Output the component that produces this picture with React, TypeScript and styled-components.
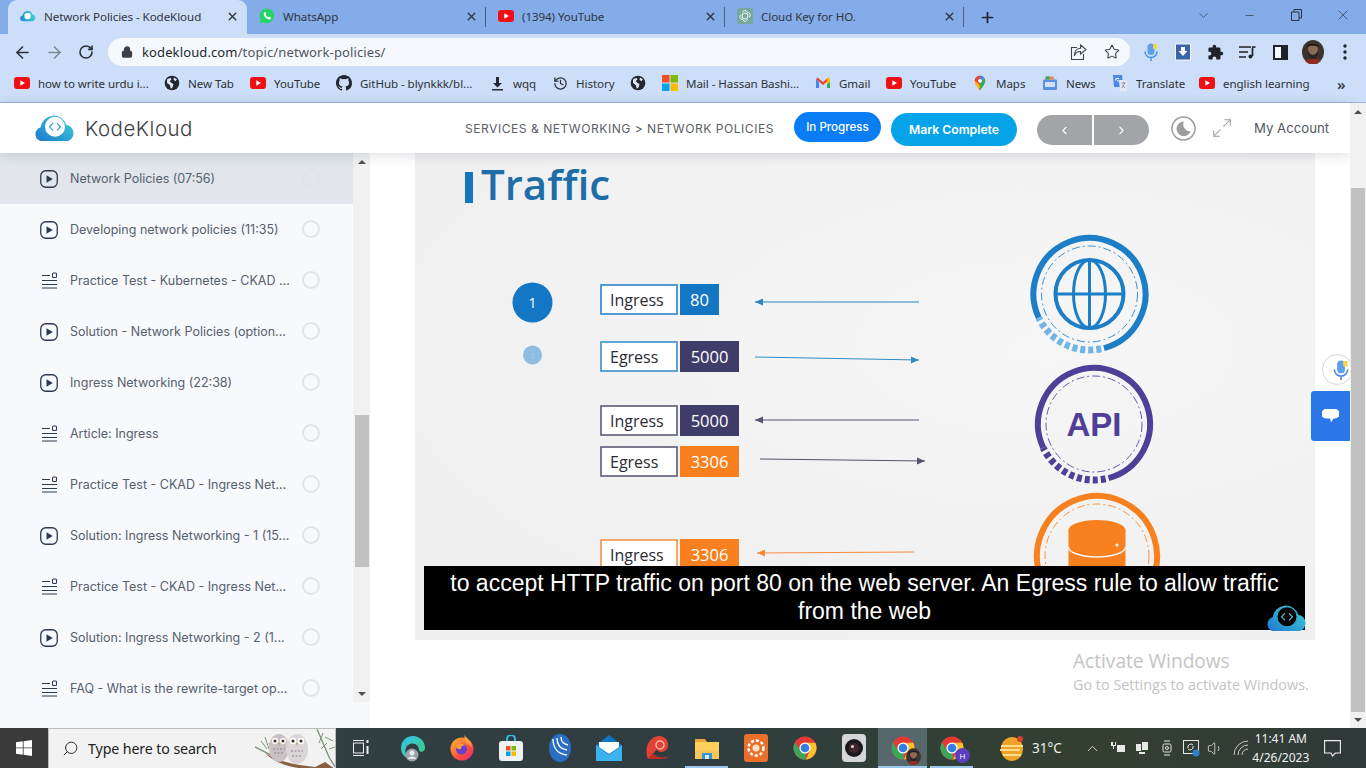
import React from 'react';
import styled, { createGlobalStyle } from 'styled-components';
import { ArrowLeft, ArrowRight, RotateCw, Lock, Star, X, Plus, ChevronDown, Minus, History, Search, ChevronUp, Maximize2, ChevronLeft, ChevronRight, Volume1 } from 'lucide-react';

const Global = createGlobalStyle`
  html, body { margin: 0; padding: 0; width: 1366px; height: 768px; overflow: hidden; background: #fff; }
  * { box-sizing: border-box; }
`;

const UI = `"Noto Sans", "Open Sans", sans-serif`;
const Root = styled.div`
  width: 1366px; height: 768px; display: flex; flex-direction: column; overflow: hidden; position: relative;
  font-family: ${UI};
`;

/* ---------- Browser chrome ---------- */
const TabStrip = styled.div`
  height: 34px; background: #84ace8; display: flex; align-items: stretch; padding-left: 8px;
`;
const Tab = styled.div<{ $active?: boolean; $sep?: boolean }>`
  width: 239px; flex: none; display: flex; align-items: center; padding: 0 8px 2px 12px; gap: 8px; position: relative;
  background: ${p => (p.$active ? '#cddff8' : 'transparent')};
  border-radius: ${p => (p.$active ? '9px 9px 0 0' : '0')};
  font-size: 11.6px; color: #30353f; letter-spacing: -0.08px;
  ${p => p.$sep ? `&::after { content: ''; position: absolute; right: 0; top: 7px; height: 20px; width: 1px; background: #4d5d78; }` : ''}
`;
const TabTitle = styled.span`flex: 1; white-space: nowrap; overflow: hidden;`;
const FavSlot = styled.span`width: 16px; height: 16px; flex: none; display: flex;`;
const NewTab = styled.div`
  width: 46px; display: flex; align-items: center; justify-content: center; color: #1f2430;
`;
const WinControls = styled.div`
  margin-left: auto; display: flex; width: 186px; align-items: flex-start; color: #2c3240;
`;
const WinBtn = styled.div`
  width: 46.5px; height: 30px; display: flex; align-items: center; justify-content: center;
`;
const ToolBar = styled.div`
  height: 33px; background: #cddff8; display: flex; align-items: center; padding: 3px 0 0 6px; position: relative;
`;
const NavIcon = styled.div<{ $dim?: boolean }>`
  width: 32px; display: flex; justify-content: center; color: ${p => (p.$dim ? '#7f8694' : '#2b3038')};
`;
const Omnibox = styled.div`
  margin-left: 6px; width: 1022px; height: 28px; border-radius: 14px; background: #f5f9fe; display: flex; align-items: center; padding: 0 2px 0 13px; color: #3d4149;
`;
const Url = styled.span`
  margin-left: 9px; flex: 1; font-size: 13px; color: #50555e; letter-spacing: 0.12px;
  b { font-weight: 400; color: #24272c; }
`;
const OmniAction = styled.div`width: 33px; display: flex; justify-content: center; color: #40454e;`;
const ExtRow = styled.div`display: flex; align-items: center; margin-left: 4.5px;`;
const ExtSlot = styled.div`width: 32.4px; display: flex; justify-content: center; align-items: center; color: #20252c;`;
const BookmarkBar = styled.div`
  height: 36px; background: #cddff8; border-bottom: 1px solid #9eb1d6; display: flex; align-items: center; padding: 0 0 3px 14px; position: relative;
`;
const Bookmark = styled.div<{ $w: number }>`
  width: ${p => p.$w}px; flex: none; display: flex; align-items: center; gap: 8px; font-size: 11.55px; color: #2d3138; white-space: nowrap; letter-spacing: -0.05px;
`;
const BmMore = styled.div`
  position: absolute; left: 1337px; top: 7px; font-size: 15px; font-weight: 600; color: #3a3f48;
`;

/* ---------- Page ---------- */
const PageFrame = styled.div`flex: 1; min-height: 0; display: flex; background: #fff; position: relative;`;
const PageColumn = styled.div`flex: 1; min-width: 0; display: flex; flex-direction: column;`;
const Header = styled.header`
  height: 50px; flex: none; background: #fff; display: flex; align-items: center; padding-left: 35px; box-shadow: 0 2px 12px rgba(40,50,70,.16); position: relative; z-index: 3;
`;
const Wordmark = styled.span`
  margin-left: 10px; font-family: Inter, sans-serif; font-weight: 300; font-size: 20.5px; color: #3c3d41; letter-spacing: 0.5px; width: 380px; flex: none;
`;
const Crumb = styled.span`
  font-family: Inter, sans-serif; font-size: 12.1px; color: #5b6068; letter-spacing: 0.5px; width: 329px; white-space: nowrap; flex: none; margin-top: 1px;
`;
const Pill = styled.div<{ $bg: string; $w: number; $h: number; $weight: number; $fs: number; $ml?: number; $mt?: number }>`
  width: ${p => p.$w}px; height: ${p => p.$h}px; background: ${p => p.$bg}; border-radius: 17px; color: #fff;
  margin-left: ${p => p.$ml || 0}px; margin-top: ${p => p.$mt || 0}px;
  font-family: Inter, sans-serif; font-weight: ${p => p.$weight}; font-size: ${p => p.$fs}px; display: flex; align-items: center; justify-content: center; flex: none;
`;
const NavGroup = styled.div`
  margin-left: 20px; width: 112px; height: 30px; display: flex; gap: 2px; border-radius: 15px; overflow: hidden; margin-top: 4px; flex: none;
`;
const NavHalf = styled.div`
  flex: 1; background: #a3a4a8; color: #fff; display: flex; align-items: center; justify-content: center;
`;
const IconSlot = styled.div<{ $ml: number; $c?: string }>`
  margin-left: ${p => p.$ml}px; display: flex; color: ${p => p.$c || '#9a9ca0'}; flex: none;
`;
const Account = styled.span`
  margin-left: 21px; font-family: Inter, sans-serif; font-size: 13.2px; color: #54585f; white-space: nowrap;
`;
const Body = styled.div`flex: 1; min-height: 0; display: flex;`;
const Sidebar = styled.aside`
  width: 370px; flex: none; background: #f8f9fc; display: flex; align-items: flex-start;
`;
const LessonList = styled.div`width: 353px; flex: none; display: flex; flex-direction: column;`;
const Lesson = styled.div<{ $on?: boolean }>`
  height: 51px; display: flex; align-items: center; padding-left: 40px; background: ${p => (p.$on ? '#e2e6ec' : 'transparent')};
`;
const LessonIcon = styled.div`width: 18px; height: 18px; display: flex; flex: none; color: #2c3a50;`;
const LessonText = styled.span`
  margin-left: 12px; width: 232px; font-family: Inter, sans-serif; font-size: 12.5px; color: #55606f; white-space: nowrap; overflow: hidden;
`;
const Radio = styled.span<{ $on?: boolean }>`
  width: 18px; height: 18px; border-radius: 50%; border: 2px solid ${p => (p.$on ? '#dfe2e7' : '#e2e4e8')}; flex: none; margin-bottom: 2px;
`;
const MiniTrack = styled.div`
  width: 17px; height: 549px; background: #f1f1f1; display: flex; flex-direction: column; align-items: center; flex: none;
`;
const PageTrack = styled.div`
  width: 16px; flex: none; background: #f1f1f1; display: flex; flex-direction: column; align-items: center; position: relative; z-index: 4;
`;
const ArrowUp = styled.i<{ $m: number }>`
  width: 0; height: 0; border: 4px solid transparent; border-top: 0; border-bottom: 4px solid #505050; margin-top: ${p => p.$m}px; flex: none;
`;
const ArrowDown = styled.i<{ $m: number }>`
  width: 0; height: 0; border: 4px solid transparent; border-bottom: 0; border-top: 4px solid #505050; margin-bottom: ${p => p.$m}px; margin-top: auto; flex: none;
`;
const Thumb = styled.div<{ $top: number; $h: number; $w: number }>`
  width: ${p => p.$w}px; height: ${p => p.$h}px; margin-top: ${p => p.$top}px; background: #c1c1c1; flex: none;
`;
const Main = styled.main`flex: 1; min-width: 0; padding-left: 45px; position: relative;`;
const Video = styled.div`
  width: 900px; height: 487px; background: radial-gradient(ellipse at 70% 40%, #f6f6f6, #f0f0f1 75%); position: relative;
  svg { display: block; }
`;
const Caption = styled.div`
  position: absolute; left: 9px; top: 413px; width: 881px; height: 64px; background: #000; color: #fff;
  font-family: "Liberation Sans", Arial, sans-serif; font-size: 23px; line-height: 28px; text-align: center; padding: 3px 20px 0;
`;
const Watermark = styled.div`position: absolute; left: 852px; top: 452px;`;
const Activate = styled.div`
  position: absolute; left: 703px; top: 496px; color: #c4c4c4; font-family: "Open Sans", sans-serif; white-space: nowrap;
  p { margin: 0; font-size: 19.1px; line-height: 25px; }
  small { display: block; font-size: 14.4px; line-height: 20px; margin-top: 1px; }
`;
const MicBubble = styled.div`
  position: absolute; left: 952px; top: 201px; width: 31px; height: 31px; border-radius: 50%; background: #fff; border: 1px solid #d4d6da; overflow: hidden; display: flex; align-items: center; padding-left: 8px;
`;
const ChatTab = styled.div`
  position: absolute; left: 941px; top: 238px; width: 39px; height: 50px; background: #2b77e8; border-radius: 3px 0 0 3px; display: flex; align-items: center; justify-content: center;
`;

/* ---------- Taskbar ---------- */
const Taskbar = styled.footer`
  height: 40px; flex: none; display: flex; align-items: center; background: linear-gradient(90deg, #343f42 0%, #2f3d41 50%, #33402f 80%, #2f3a3a 100%); color: #fff; position: relative; z-index: 5;
`;
const StartBtn = styled.div`width: 48px; height: 40px; flex: none; background: #3a3a3a; display: flex; align-items: center; justify-content: center;`;
const SearchBox = styled.div`
  width: 288px; height: 40px; flex: none; background: #f2f2f2; border: 1px solid #bdbdbd; border-bottom: 0; display: flex; align-items: center; padding-left: 13px; color: #222; font-size: 14.2px; position: relative; overflow: hidden;
  span { margin-left: 9px; letter-spacing: -0.1px; }
`;
const SearchGlyph = styled(Search)`transform: scaleX(-1); flex: none;`;
const OwlArt = styled.div`position: absolute; right: 0; top: 0;`;
const TaskIcon = styled.div<{ $w: number; $ml?: number; $active?: boolean; $run?: boolean }>`
  width: ${p => p.$w}px; height: 40px; margin-left: ${p => p.$ml || 0}px; display: flex; align-items: center; justify-content: center; flex: none; position: relative;
  background: ${p => (p.$active ? '#56686c' : 'transparent')};
  ${p => p.$run ? `&::after { content: ''; position: absolute; left: ${p.$active ? 0 : 3}px; right: ${p.$active ? 0 : 3}px; bottom: 0; height: 2px; background: #9cc8ee; }` : ''}
`;
const Badge = styled.span`position: absolute; left: 28px; top: 20px; display: flex;`;
const Weather = styled.div`
  margin-left: 24px; width: 80.7px; display: flex; align-items: center; font-size: 13.5px; gap: 8px; flex: none; color: #eee;
`;
const Tray = styled.div`display: flex; align-items: center; color: #e8e8e8; flex: none;`;
const TraySlot = styled.div`width: 24.6px; display: flex; justify-content: center;`;
const Clock = styled.div`
  width: 60px; text-align: center; font-size: 12px; line-height: 19px; color: #f1f1f1; margin-left: -2px; flex: none;
`;

/* ---------- Drawn icons ---------- */
const Chrome = ({ s = 24 }: { s?: number }) => (
  <svg width={s} height={s} viewBox="0 0 24 24">
    <circle cx="12" cy="12" r="11.5" fill="#e53935" />
    <path d="M12 12 L2.1 17.8 A11.5 11.5 0 0 0 13 23.5 Z" fill="#3aa757" />
    <path d="M12 6.8h10.3A11.5 11.5 0 0 1 13 23.5L17 14z" fill="#fbc02d" />
    <path d="M7 14.8 2.1 6.2 A11.5 11.5 0 0 0 2.1 17.8 L6 21.5 12 17.5z" fill="#3aa757" />
    <circle cx="12" cy="12" r="5.6" fill="#fff" />
    <circle cx="12" cy="12" r="4.3" fill="#2f7de6" />
  </svg>
);
const YT = () => (
  <svg width="16" height="16" viewBox="0 0 16 16">
    <rect x="0" y="2" width="16" height="12" rx="3" fill="#f00f14" />
    <path d="M6.3 5.3v5.4L11 8z" fill="#fff" />
  </svg>
);
const Globe = () => (
  <svg width="16" height="16" viewBox="0 0 16 16">
    <circle cx="8" cy="8" r="7.3" fill="#23272e" />
    <path d="M3 4.5l3.4-1.8 1 1.6-1.6 1.9L7.5 8l2 1-1 3.5-1.7 1.3L5.8 10 3 8zM10 2.4l3 2-1.8 1.8L9.5 4.5z" fill="#dfe8f6" />
  </svg>
);
const GitHub = () => (
  <svg width="16" height="16" viewBox="0 0 16 16" fill="#22262c">
    <path d="M8 0C3.58 0 0 3.58 0 8c0 3.54 2.29 6.53 5.47 7.59.4.07.55-.17.55-.38v-1.34c-2.23.48-2.69-1.07-2.69-1.07-.36-.93-.89-1.17-.89-1.17-.73-.5.06-.49.06-.49.8.06 1.23.82 1.23.82.71 1.23 1.87.87 2.33.66.07-.52.28-.87.51-1.07-1.78-.2-3.64-.89-3.64-3.95 0-.87.31-1.59.82-2.15-.08-.2-.36-1.02.08-2.12 0 0 .67-.21 2.2.82a7.6 7.6 0 0 1 4 0c1.53-1.04 2.2-.82 2.2-.82.44 1.1.16 1.92.08 2.12.51.56.82 1.27.82 2.15 0 3.07-1.87 3.75-3.65 3.95.29.25.54.73.54 1.48v2.2c0 .21.15.46.55.38A8 8 0 0 0 16 8c0-4.42-3.58-8-8-8z" />
  </svg>
);
const DownloadBm = () => (
  <svg width="15" height="15" viewBox="0 0 15 15" fill="#25292f">
    <path d="M6 1h3v6h3l-4.500 4.500L3 7h3zM2 13h11v1.500H2z" />
  </svg>
);
const MsGrid = () => (
  <svg width="16" height="16" viewBox="0 0 16 16">
    <rect width="7.5" height="7.5" fill="#f25022" /><rect x="8.5" width="7.5" height="7.5" fill="#7fba00" />
    <rect y="8.5" width="7.5" height="7.5" fill="#00a4ef" /><rect x="8.5" y="8.5" width="7.5" height="7.5" fill="#ffb900" />
  </svg>
);
const Gmail = () => (
  <svg width="16" height="16" viewBox="0 0 16 16">
    <path d="M1 4v9h3V7z" fill="#4285f4" /><path d="M15 4v9h-3V7z" fill="#34a853" />
    <path d="M1 4.2 2.6 2.6 8 7l5.4-4.4L15 4.2 8 10z" fill="#ea4335" />
    <path d="M13.4 2.6 15 4.2V7l-3 2.5V4z" fill="#fbbc04" />
  </svg>
);
const MapsPin = () => (
  <svg width="16" height="16" viewBox="0 0 16 16">
    <path d="M8 0.5a5.3 5.3 0 0 0-5.3 5.3C2.7 9.5 8 15.5 8 15.5V9.5z" fill="#ea4335" />
    <path d="M8 .5a5.3 5.3 0 0 1 4.3 2.2L8 7.5z" fill="#4285f4" />
    <path d="M12.3 2.7a5.3 5.3 0 0 1 1 3.1C13.3 9.5 8 15.5 8 15.5V8z" fill="#34a853" />
    <path d="M2.7 5.8 8 10l-.5 4.9C6 13 2.7 9 2.7 5.8z" fill="#fbbc04" />
    <circle cx="8" cy="5.8" r="1.9" fill="#fff" />
  </svg>
);
const NewsIco = () => (
  <svg width="16" height="16" viewBox="0 0 16 16">
    <rect x="1" y="4.5" width="14" height="10.5" rx="1" fill="#5b8fe4" />
    <path d="M3 4.5 5 1.5h6l2 3z" fill="#ea8a5a" />
    <rect x="3" y="7" width="10" height="5" fill="#cfe0fb" />
    <path d="M3.5 1.5h4v3h-4z" fill="#34a853" />
  </svg>
);
const TranslateIco = () => (
  <svg width="16" height="18" viewBox="0 0 16 18">
    <path d="M1 1h9l1 12H2z" fill="#4a86e8" />
    <path d="M7 6h8v11H8z" fill="#e6e9ef" />
    <path d="M3.5 6.4a2 2 0 0 1 3.4-1.4M6.9 7H5" stroke="#fff" fill="none" strokeWidth="1.1" />
    <path d="M9.5 9h4M11.5 8v1M10 14l3-5M10.5 10.5 13 14" stroke="#8b8f96" fill="none" strokeWidth=".9" />
  </svg>
);
const KKFav = () => (
  <svg width="16" height="16" viewBox="0 0 40 26">
    <defs><linearGradient id="kf" x1="0" x2="1"><stop offset="0" stopColor="#1f87d6" /><stop offset="1" stopColor="#41cfd6" /></linearGradient></defs>
    <path d="M8 26a7.5 7.5 0 0 1-1.2-14.9A12.5 12.5 0 0 1 31 9a8.7 8.7 0 0 1 1 17z" fill="url(#kf)" />
    <circle cx="19" cy="13" r="8" fill="#fff" />
  </svg>
);
const KKLogo = ({ id, ring = '#fff', inner = '#2e9fdc', outline = 'none' }: { id: string; ring?: string; inner?: string; outline?: string }) => (
  <svg width={40} height={26.4} viewBox="0 0 40 26.4">
    <defs><linearGradient id={id} x1="0" x2="1" y1="1" y2="0"><stop offset="0" stopColor="#1b78cf" /><stop offset="1" stopColor="#45d3d6" /></linearGradient></defs>
    <path d="M7.5 26.4A7.2 7.2 0 0 1 5.6 12.3 13.2 13.2 0 0 1 31.3 9.800 8.400 8.400 0 0 1 31.600 26.400z" fill={`url(#${id})`} />
    <circle cx="20" cy="11.800" r="10" fill={ring} stroke={outline} />
    <path d="M18 8.200l-3.400 3.600 3.400 3.600M22 8.200l3.400 3.600-3.400 3.600" fill="none" stroke={inner} strokeWidth="1.200" />
  </svg>
);
const WhatsIco = () => (
  <svg width="16" height="16" viewBox="0 0 16 16">
    <path d="M8 .5a7.3 7.3 0 0 0-6.3 11L.6 15.4l4-1.1A7.3 7.3 0 1 0 8 .5z" fill="#25d366" />
    <path d="M5.5 4.3c-.7.5-1 1.3-.7 2.4.5 1.8 2.6 4 4.7 4.6 1 .3 1.9-.1 2.3-.9l.1-.9-1.8-.9-.8 1C8.5 9.3 7 7.9 6.500 6.600l.7-.8-.8-1.700z" fill="#fff" />
  </svg>
);
const GptIco = () => (
  <svg width="16" height="16" viewBox="0 0 16 16">
    <rect width="16" height="16" rx="2.5" fill="#74aa9c" />
    <g fill="none" stroke="#f2f7f6" strokeWidth="1">
      <circle cx="8" cy="8" r="3" /><path d="M5.500 4.500a2.400 2.400 0 0 1 4.500-.6l1.700 1a2.300 2.300 0 0 1 .3 4.300M4 6.700a2.400 2.400 0 0 0 .2 4.200l1.700 1a2.400 2.400 0 0 0 4.500-.5" />
    </g>
  </svg>
);
const ShareIco = () => (
  <svg width="17" height="17" viewBox="0 0 17 17" fill="none" stroke="#40454e" strokeWidth="1.100">
    <path d="M7 3.500H1.500v12h12V10" />
    <path d="M10.500 1 16 5.500 10.500 10V7.500C7 7.500 5 9 4.500 12c-.3-4.500 1.500-7.500 6-7.700z" />
  </svg>
);
const MicIco = ({ s = 18 }: { s?: number }) => (
  <svg width={s} height={s} viewBox="0 0 18 18">
    <rect x="5.500" y="0.500" width="7" height="11.500" rx="3.500" fill="#5f9ee8" />
    <rect x="11" y="1" width="4" height="5" rx="1" fill="#f7d64b" />
    <path d="M3 8.500a6 6 0 0 0 12 0M9 14.500V18" stroke="#4a8de3" strokeWidth="1.500" fill="none" />
  </svg>
);
const Puzzle = () => (
  <svg width="17" height="17" viewBox="0 0 24 24" fill="#1f2329">
    <path d="M20.500 11H19V7a2 2 0 0 0-2-2h-4V3.500a2.500 2.500 0 0 0-5 0V5H4a2 2 0 0 0-2 2v3.800h1.500a2.700 2.700 0 0 1 0 5.400H2V20a2 2 0 0 0 2 2h3.800v-1.500a2.700 2.700 0 0 1 5.400 0V22H17a2 2 0 0 0 2-2v-4h1.500a2.500 2.500 0 0 0 0-5z" />
  </svg>
);
const MediaIco = () => (
  <svg width="17" height="15" viewBox="0 0 17 15" fill="none" stroke="#1f2329" strokeWidth="1.600">
    <path d="M0 2h12M0 7h9M0 12h7" /><path d="M13.500 2.500V11" strokeWidth="1.700" /><circle cx="11.500" cy="11.500" r="2" fill="#1f2329" stroke="none" /><path d="M13 2h3.500" />
  </svg>
);
const SidePanelIco = () => (
  <svg width="15" height="15" viewBox="0 0 15 15"><path d="M0 0h15v15H0z" fill="#1f2329" /><path d="M2 2h6v11H2z" fill="#f5f9fe" /></svg>
);
const Avatar = ({ w = 22, h = 24 }: { w?: number; h?: number }) => (
  <svg width={w} height={h} viewBox="0 0 22 24">
    <ellipse cx="11" cy="12" rx="11" ry="12" fill="#3d342f" />
    <ellipse cx="11" cy="9" rx="5" ry="5.800" fill="#8c6a56" />
    <path d="M4 7.500C6 2 16 2 18 7.500 14 5 8 5 4 7.500z" fill="#1e1815" />
    <path d="M6 11c2 6 8 6 10 0 0 7-3 8-5 8s-5-1-5-8z" fill="#2a2120" />
    <path d="M3 21c4-3 12-3 16 0l-4 3H7z" fill="#8f2a24" />
  </svg>
);
const DownloadBadge = () => (
  <svg width="16" height="18" viewBox="0 0 16 18">
    <rect x=".5" y="1" width="15" height="16" fill="#3b63a8" stroke="#f3f6fb" />
    <path d="M6 4h4v4h2.500L8 13 3.500 8H6z" fill="#fff" />
  </svg>
);
const PlayBox = () => (
  <svg width="18" height="18" viewBox="0 0 18 18" fill="none">
    <rect x=".75" y=".75" width="16.500" height="16.500" rx="5" stroke="#2c3a50" strokeWidth="1.300" />
    <path d="M6.500 5.200v7.600L12.800 9z" fill="#2c3a50" />
  </svg>
);
const ListBox = () => (
  <svg width="18" height="18" viewBox="0 0 18 18" fill="none" stroke="#2c3a50" strokeWidth="1.100">
    <path d="M2 3.500h8M2 8.500h15M2 12.500h15M2 16h15" />
    <rect x="12.500" y="1" width="4" height="4.500" rx="1" />
  </svg>
);
const Moon = () => (
  <svg width="25" height="25" viewBox="0 0 25 25">
    <circle cx="12.500" cy="12.500" r="11.500" fill="none" stroke="#9b9da1" strokeWidth="1.500" />
    <path d="M13 5.500a7.300 7.300 0 1 0 6.600 9.800A6.800 6.800 0 0 1 13 5.500z" fill="#9b9da1" />
  </svg>
);
const Windows = () => (
  <svg width="16" height="16" viewBox="0 0 16 16" fill="#fff">
    <path d="M0 2.300 6.800 1.300v6.200H0zM7.600 1.200 16 0v7.500H7.600zM0 8.300h6.800v6.400L0 13.700zM7.600 8.300H16V16l-8.400-1.200z" />
  </svg>
);
const Owls = () => (
  <svg width="80" height="40" viewBox="0 0 80 40">
    <path d="M0 18l18 9 12 8M62 0l6 14 6 14 6 10" stroke="#7e9a78" strokeWidth="1.400" fill="none" />
    <path d="M6 12l6 8M10 8l4 12M14 14l4 8M68 4l-4 10M70 8l8 4M72 14l-6 6M74 20l6-2" stroke="#7c9b76" strokeWidth="1" />
    <path d="M10 24 C22 32 40 36 60 38 L70 33 80 40H58C40 40 22 36 10 24z" fill="#8a6142" />
    <ellipse cx="24" cy="19" rx="10" ry="14" fill="#c9c2c4" />
    <ellipse cx="42" cy="20" rx="11" ry="15" fill="#dad6d8" />
    <path d="M18 20h12M19 24h10M36 22h12M37 27h10" stroke="#8a8587" strokeWidth="1" strokeDasharray="2 1.500" />
    <circle cx="20" cy="12" r="3" fill="#fff" /><circle cx="28" cy="12" r="3" fill="#fff" />
    <circle cx="38" cy="12" r="3.200" fill="#fff" /><circle cx="46" cy="12" r="3.200" fill="#fff" />
    <circle cx="20" cy="12" r="1.500" fill="#3a3330" /><circle cx="28" cy="12" r="1.500" fill="#3a3330" />
    <circle cx="38" cy="12" r="1.600" fill="#3a3330" /><circle cx="46" cy="12" r="1.600" fill="#3a3330" />
    <path d="M23 14l1 3 1-3zM41 14l1 3 1-3z" fill="#d19a3d" />
  </svg>
);
const TaskView = () => (
  <svg width="16" height="18" viewBox="0 0 16 18" fill="none" stroke="#f0f0f0" strokeWidth="1">
    <path d="M0 1.500h11M0 16.500h11" /><rect x=".5" y="4" width="10" height="10" /><path d="M14.500 1v3M14.500 7v8" strokeWidth="2" />
  </svg>
);
const Edge = () => (
  <svg width="26" height="28" viewBox="0 0 26 28">
    <defs><linearGradient id="eg" x1="0" x2="1" y1="0" y2="1"><stop offset="0" stopColor="#35c1f1" /><stop offset="1" stopColor="#3ad36e" /></linearGradient></defs>
    <path d="M13 2a12 12 0 0 1 12 12c0 3-3 4.500-5 3.500-1.500-1-1-3-2-5C16 9 11 8.500 8 11 4 14 5 22 9 25 3 23 1 18 1 14 1 7 6 2 13 2z" fill="url(#eg)" />
    <circle cx="12" cy="21" r="6.500" fill="#9aa3ad" /><circle cx="12" cy="19" r="2.500" fill="#e8eaee" /><path d="M7.500 25c1-3.500 8-3.500 9 0z" fill="#e8eaee" />
  </svg>
);
const Firefox = () => (
  <svg width="24" height="26" viewBox="0 0 24 26">
    <defs><linearGradient id="ff" x1="0" x2="1" y1="0" y2="1"><stop offset="0" stopColor="#ffbd2e" /><stop offset=".6" stopColor="#ff4f3a" /><stop offset="1" stopColor="#e0218a" /></linearGradient></defs>
    <circle cx="12" cy="14" r="11.500" fill="url(#ff)" />
    <path d="M14 0c3 3 7 6 8 12L16 8z" fill="#ffa436" />
    <circle cx="11.500" cy="14" r="5.500" fill="#6a3fd0" />
    <path d="M6 11c2-4 8-3 9 0-2-1-3 0-4 1 1 1 0 3-2 2-2 0-3-1-3-3z" fill="#ff9a3a" />
  </svg>
);
const StoreIco = () => (
  <svg width="24" height="26" viewBox="0 0 24 26">
    <path d="M8 7V4a4 4 0 0 1 8 0v3" stroke="#33bfe0" strokeWidth="2" fill="none" />
    <rect x="0" y="6" width="24" height="20" rx="3" fill="#eef2f5" />
    <rect x="7" y="11" width="4.500" height="4.500" fill="#f25022" /><rect x="12.500" y="11" width="4.500" height="4.500" fill="#7fba00" />
    <rect x="7" y="16.500" width="4.500" height="4.500" fill="#00a4ef" /><rect x="12.500" y="16.500" width="4.500" height="4.500" fill="#ffb900" />
  </svg>
);
const WavyBlue = () => (
  <svg width="22" height="28" viewBox="0 0 22 28">
    <ellipse cx="11" cy="14" rx="11" ry="14" fill="#2b6ec3" />
    <path d="M4 5c0 9 5 15 14 16M8 4c0 7 3 11 10 12M12 3c0 5 2 7 7 8" stroke="#fff" strokeWidth="1.400" fill="none" />
  </svg>
);
const MailIco = () => (
  <svg width="26" height="26" viewBox="0 0 26 26">
    <path d="M0 10 13 0l13 10v16H0z" fill="#0f75c4" />
    <path d="M0 10 13 20 26 10v16H0z" fill="#3bb3ee" />
    <path d="M3 7h20v5l-10 7L3 12z" fill="#fff" />
  </svg>
);
const SnailIco = () => (
  <svg width="25" height="26" viewBox="0 0 25 26">
    <path d="M3 24C-1 14 3 2 14 1c8 0 11 8 8 13-3 4-9 4-10 0-1-3 2-5 4-4" fill="#e34234" />
    <path d="M3 24h14c3 0 6-1 7-3-6 3-14 1-16-3z" fill="#bf2c21" />
    <circle cx="15" cy="10" r="4" fill="none" stroke="#ffb8a8" strokeWidth="1.500" />
  </svg>
);
const FolderIco = () => (
  <svg width="24" height="24" viewBox="0 0 24 24">
    <path d="M0 3h10l2 3H0z" fill="#e8a93a" /><rect y="6" width="24" height="17" fill="#ffd15c" />
    <rect x="0" y="14" width="24" height="9" fill="#f8c75a" /><rect x="7" y="17" width="10" height="6" fill="#3a93d6" /><rect x="10" y="19" width="4" height="4" fill="#cfeaf8" />
  </svg>
);
const OrangeApp = () => (
  <svg width="24" height="28" viewBox="0 0 24 28">
    <rect width="24" height="28" rx="3" fill="#e9702a" />
    <circle cx="12" cy="14" r="7.500" fill="none" stroke="#fff" strokeWidth="2.500" strokeDasharray="3 2" />
    <circle cx="12" cy="14" r="3.500" fill="#ffe3c7" />
  </svg>
);
const CameraApp = () => (
  <svg width="24" height="28" viewBox="0 0 24 28">
    <rect width="24" height="28" rx="4" fill="#d5d6d8" />
    <circle cx="12" cy="14" r="9" fill="#1a1a1d" /><circle cx="12" cy="14" r="5" fill="#45262c" /><circle cx="10.500" cy="12.500" r="1.500" fill="#e0e0e0" />
  </svg>
);
const WeatherIco = () => (
  <svg width="24" height="26" viewBox="0 0 24 26">
    <ellipse cx="12" cy="14" rx="11" ry="12" fill="#eda429" />
    <path d="M1 11h22M0 15h20M3 20h18" stroke="#fcdc8c" strokeWidth="2" />
    <circle cx="20" cy="4" r="3" fill="#d9402f" />
  </svg>
);
const Notif = () => (
  <svg width="17" height="17" viewBox="0 0 17 17" fill="none" stroke="#f0f0f0" strokeWidth="1.100">
    <path d="M.6.6h15.800v12.400h-5L8.500 16 7 13H.6z" />
  </svg>
);
const HBadge = () => (
  <svg width="15" height="15" viewBox="0 0 15 15">
    <circle cx="7.500" cy="7.500" r="7.500" fill="#5b3fc0" />
    <text x="7.500" y="10.500" textAnchor="middle" fontFamily="'Open Sans', sans-serif" fontSize="8" fill="#fff">H</text>
  </svg>
);
const TrayIcons = [
  <svg key="a" width="16" height="12" viewBox="0 0 16 12" fill="currentColor"><path d="M1 0h2v3h2V0h1v4H4v3H3V4H1zM7 3h8v7H7z" /></svg>,
  <svg key="b" width="14" height="14" viewBox="0 0 14 14" fill="currentColor"><path d="M1 3h5v7H1zM7 1h6v8H7zM4 11h6v2H4z" /></svg>,
  <svg key="c" width="12" height="16" viewBox="0 0 12 16" fill="none" stroke="currentColor"><rect x="2" y="4" width="8" height="8" rx="1.500" /><path d="M3 1h6M3 15h6" /><circle cx="6" cy="8" r="1.500" /></svg>,
  <svg key="d" width="17" height="17" viewBox="0 0 17 17" fill="none" stroke="currentColor"><rect x=".5" y=".5" width="15" height="13" /><path d="M5 8a3 3 0 0 1 5-3M10 6a3 3 0 0 1-5 3" /><circle cx="13" cy="13" r="3.500" fill="#2f81c8" stroke="none" /></svg>,
];

/* ---------- Slide artwork ---------- */
const ringPts = (r: number, a0: number, a1: number) => {
  const pt = (a: number) => [r * Math.cos((a * Math.PI) / 180), r * Math.sin((a * Math.PI) / 180)];
  const [x0, y0] = pt(a0);
  const [x1, y1] = pt(a1);
  return `M${x0} ${y0}A${r} ${r} 0 ${a1 - a0 > 180 ? 1 : 0} 1 ${x1} ${y1}`;
};
const Ring = ({ cx, cy, r, c, tail, children }: { cx: number; cy: number; r: number; c: string; tail: string; children?: React.ReactNode }) => (
  <g transform={`translate(${cx} ${cy})`} fill="none">
    <path d={ringPts(r - 3, -205, 75)} stroke={c} strokeWidth="6" />
    <path d={ringPts(r - 3, 78, 155)} stroke={tail} strokeWidth="7" strokeDasharray="5 3" />
    <circle r={r - 11} stroke={c} strokeWidth="1" strokeDasharray="8 3 2 3" opacity=".85" />
    {children}
  </g>
);
const RuleRow = ({ x, y, h, name, nameStroke, port, portFill, portW }: { x: number; y: number; h: number; name: string; nameStroke: string; port: string; portFill: string; portW: number }) => (
  <g>
    <rect x={x + 1} y={y + 1} width="76" height={h - 2} fill="#fff" stroke={nameStroke} strokeWidth="1.600" />
    <text x={x + 10} y={y + h - 9.500} fontFamily="'Open Sans', sans-serif" fontSize="16" fill="#2a2c33">{name}</text>
    <rect x={x + 80} y={y} width={portW} height={h} fill={portFill} />
    <text x={x + 80 + portW / 2} y={y + h - 9.500} textAnchor="middle" fontFamily="'Open Sans', sans-serif" fontSize="16.500" fill="#fff">{port}</text>
  </g>
);
const Arrow = ({ x1, y1, x2, y2, c }: { x1: number; y1: number; x2: number; y2: number; c: string }) => {
  const d = x2 > x1 ? -1 : 1;
  return (
    <g>
      <line x1={x1} y1={y1} x2={x2} y2={y2} stroke={c} strokeWidth="1" />
      <path d={`M${x2} ${y2}l${d * 8} -3.500v7z`} fill={c} />
    </g>
  );
};
const Slide = () => (
  <svg width="900" height="487" viewBox="415 153 900 487">
    <rect x="465" y="172" width="8" height="31" fill="#1477be" />
    <text x="481" y="200" fontFamily="'Open Sans', sans-serif" fontWeight="600" fontSize="42" fill="#1d6ea8">Traffic</text>
    <circle cx="532.500" cy="302.500" r="20" fill="#1377c6" />
    <text x="532.500" y="308" textAnchor="middle" fontFamily="'Open Sans', sans-serif" fontSize="14" fill="#fff">1</text>
    <circle cx="532.500" cy="355" r="9.500" fill="#8fbde2" />
    <text x="532.500" y="358" textAnchor="middle" fontFamily="'Open Sans', sans-serif" fontSize="8" fill="#a3cbe8">2</text>

    <RuleRow x={600} y={284} h={31} name="Ingress" nameStroke="#2a84c6" port="80" portFill="#1577c4" portW={39} />
    <RuleRow x={600} y={341} h={31} name="Egress" nameStroke="#3b90cb" port="5000" portFill="#403c69" portW={59} />
    <RuleRow x={600} y={405} h={31} name="Ingress" nameStroke="#5b5a76" port="5000" portFill="#403c69" portW={59} />
    <RuleRow x={600} y={446} h={31} name="Egress" nameStroke="#5b5a76" port="3306" portFill="#f9801e" portW={59} />
    <RuleRow x={600} y={539} h={31} name="Ingress" nameStroke="#f0934a" port="3306" portFill="#f9801e" portW={59} />

    <Arrow x1={919} y1={302} x2={755} y2={302} c="#2a84c6" />
    <Arrow x1={755} y1={357} x2={919} y2={360} c="#2f8bc9" />
    <Arrow x1={919} y1={420} x2={755} y2={420} c="#55536f" />
    <Arrow x1={760} y1={459} x2={925} y2={461} c="#55536f" />
    <Arrow x1={914} y1={552} x2={757} y2={553} c="#f68a3b" />

    <Ring cx={1089.500} cy={294} r={59} c="#1b7ec6" tail="#71b4e6">
      <circle r="34" stroke="#1b7ec6" strokeWidth="4" />
      <ellipse rx="16" ry="34" stroke="#1b7ec6" strokeWidth="3" />
      <path d="M-34 0H34M0 -34V34" stroke="#1b7ec6" strokeWidth="3" />
    </Ring>
    <Ring cx={1094} cy={424} r={59} c="#4f3f98" tail="#4f3f98">
      <text x="0" y="12" textAnchor="middle" fontFamily="'Liberation Sans', sans-serif" fontWeight="700" fontSize="33" fill="#4f3f98" stroke="none">API</text>
    </Ring>
    <Ring cx={1097} cy={556} r={63} c="#f9801e" tail="#f9801e">
      <ellipse cx="0" cy="-26" rx="28.500" ry="10" fill="#f9801e" />
      <rect x="-28.500" y="-26" width="57" height="60" fill="#f9801e" />
      <path d="M-28.500 -9a28.500 10 0 0 0 57 0M-28.500 10a28.500 10 0 0 0 57 0" stroke="#f5f5f5" strokeWidth="1.500" />
      <circle cx="20" cy="-11" r="1.600" fill="#f5f5f5" />
    </Ring>
  </svg>
);

const lessons: { t: string; kind: 'play' | 'list'; on?: boolean }[] = [
  { t: 'Network Policies (07:56)', kind: 'play', on: true },
  { t: 'Developing network policies (11:35)', kind: 'play' },
  { t: 'Practice Test - Kubernetes - CKAD ...', kind: 'list' },
  { t: 'Solution - Network Policies (option...', kind: 'play' },
  { t: 'Ingress Networking (22:38)', kind: 'play' },
  { t: 'Article: Ingress', kind: 'list' },
  { t: 'Practice Test - CKAD - Ingress Net...', kind: 'list' },
  { t: 'Solution: Ingress Networking - 1 (15...', kind: 'play' },
  { t: 'Practice Test - CKAD - Ingress Net...', kind: 'list' },
  { t: 'Solution: Ingress Networking - 2 (1...', kind: 'play' },
  { t: 'FAQ - What is the rewrite-target op...', kind: 'list' },
];

const bookmarks: { t?: string; i: React.ReactNode; w: number }[] = [
  { t: 'how to write urdu i...', i: <YT />, w: 150 },
  { t: 'New Tab', i: <Globe />, w: 86 },
  { t: 'YouTube', i: <YT />, w: 86 },
  { t: 'GitHub - blynkkk/bl...', i: <GitHub />, w: 154 },
  { t: 'wqq', i: <DownloadBm />, w: 63 },
  { t: 'History', i: <History size={15} />, w: 77 },
  { i: <Globe />, w: 32 },
  { t: 'Mail - Hassan Bashi...', i: <MsGrid />, w: 153 },
  { t: 'Gmail', i: <Gmail />, w: 71 },
  { t: 'YouTube', i: <YT />, w: 86 },
  { t: 'Maps', i: <MapsPin />, w: 70 },
  { t: 'News', i: <NewsIco />, w: 70 },
  { t: 'Translate', i: <TranslateIco />, w: 87 },
  { t: 'english learning', i: <YT />, w: 120 },
];

export default function App() {
  return (
    <Root>
      <Global />
      <TabStrip>
        <Tab $active><FavSlot><KKFav /></FavSlot><TabTitle>Network Policies - KodeKloud</TabTitle><X size={13} strokeWidth={2.6} /></Tab>
        <Tab $sep><FavSlot><WhatsIco /></FavSlot><TabTitle>WhatsApp</TabTitle><X size={13} strokeWidth={2.6} /></Tab>
        <Tab $sep><FavSlot><YT /></FavSlot><TabTitle>(1394) YouTube</TabTitle><X size={13} strokeWidth={2.6} /></Tab>
        <Tab $sep><FavSlot><GptIco /></FavSlot><TabTitle>Cloud Key for HO.</TabTitle><X size={13} strokeWidth={2.6} /></Tab>
        <NewTab><Plus size={17} strokeWidth={2.4} /></NewTab>
        <WinControls>
          <WinBtn><ChevronDown size={15} strokeWidth={1} /></WinBtn>
          <WinBtn><Minus size={13} strokeWidth={1.2} /></WinBtn>
          <WinBtn>
            <svg width="11" height="12" viewBox="0 0 11 12" fill="none" stroke="#2c3240"><path d="M.5 3h7.500v8.500H.5zM3 3V.5h7.500V9H8" /></svg>
          </WinBtn>
          <WinBtn><X size={16} strokeWidth={1} /></WinBtn>
        </WinControls>
      </TabStrip>
      <ToolBar>
        <NavIcon><ArrowLeft size={19} strokeWidth={2} /></NavIcon>
        <NavIcon $dim><ArrowRight size={19} strokeWidth={2} /></NavIcon>
        <NavIcon><RotateCw size={16} strokeWidth={2.4} /></NavIcon>
        <Omnibox>
          <Lock size={12} strokeWidth={2.6} fill="#3d4149" />
          <Url><b>kodekloud.com</b>/topic/network-policies/</Url>
          <OmniAction><ShareIco /></OmniAction>
          <OmniAction><Star size={16} strokeWidth={1.6} /></OmniAction>
        </Omnibox>
        <ExtRow>
          <ExtSlot><MicIco /></ExtSlot>
          <ExtSlot><DownloadBadge /></ExtSlot>
          <ExtSlot><Puzzle /></ExtSlot>
          <ExtSlot><MediaIco /></ExtSlot>
          <ExtSlot><SidePanelIco /></ExtSlot>
          <ExtSlot><Avatar /></ExtSlot>
          <ExtSlot>
            <svg width="4" height="16" viewBox="0 0 4 16" fill="#20252c"><circle cx="2" cy="2" r="1.700" /><circle cx="2" cy="8" r="1.700" /><circle cx="2" cy="14" r="1.700" /></svg>
          </ExtSlot>
        </ExtRow>
      </ToolBar>
      <BookmarkBar>
        {bookmarks.map((b, i) => (
          <Bookmark key={i} $w={b.w}>{b.i}{b.t && <span>{b.t}</span>}</Bookmark>
        ))}
        <BmMore>»</BmMore>
      </BookmarkBar>

      <PageFrame>
        <PageColumn>
          <Header>
            <KKLogo id="kk-head" />
            <Wordmark>KodeKloud</Wordmark>
            <Crumb>SERVICES &amp; NETWORKING &gt; NETWORK POLICIES</Crumb>
            <Pill $bg="#0a7df5" $w={87} $h={30} $weight={500} $fs={11.6} $mt={-2}>In Progress</Pill>
            <Pill $bg="#06a3e8" $w={126} $h={33} $weight={600} $fs={12.2} $ml={10} $mt={3}>Mark Complete</Pill>
            <NavGroup>
              <NavHalf><ChevronLeft size={13} strokeWidth={2} /></NavHalf>
              <NavHalf><ChevronRight size={13} strokeWidth={2} /></NavHalf>
            </NavGroup>
            <IconSlot $ml={22}><Moon /></IconSlot>
            <IconSlot $ml={15}><Maximize2 size={22} strokeWidth={1.1} /></IconSlot>
            <Account>My Account</Account>
          </Header>
          <Body>
            <Sidebar>
              <LessonList>
                {lessons.map((l, i) => (
                  <Lesson key={i} $on={l.on}>
                    <LessonIcon>{l.kind === 'play' ? <PlayBox /> : <ListBox />}</LessonIcon>
                    <LessonText>{l.t}</LessonText>
                    <Radio $on={l.on} />
                  </Lesson>
                ))}
              </LessonList>
              <MiniTrack>
                <ArrowUp $m={7} />
                <Thumb $top={251} $h={152} $w={14} />
                <ArrowDown $m={6} />
              </MiniTrack>
            </Sidebar>
            <Main>
              <Video>
                <Slide />
                <Caption>to accept HTTP traffic on port 80 on the web server. An Egress rule to allow traffic from the web</Caption>
                <Watermark><KKLogo id="kk-mark" ring="#000" inner="#4fc2d9" outline="#2ba6c9" /></Watermark>
              </Video>
              <Activate>
                <p>Activate Windows</p>
                <small>Go to Settings to activate Windows.</small>
              </Activate>
              <MicBubble><MicIco s={20} /></MicBubble>
              <ChatTab>
                <svg width="17" height="16" viewBox="0 0 17 16" fill="#fff"><path d="M4 1h9a3.500 3.500 0 0 1 0 9.500h-1.500L9 14.500 8.200 10.500H4A3.500 3.500 0 0 1 4 1z" /></svg>
              </ChatTab>
            </Main>
          </Body>
        </PageColumn>
        <PageTrack>
          <ArrowUp $m={7} />
          <Thumb $top={74} $h={524} $w={14} />
          <ArrowDown $m={6} />
        </PageTrack>
      </PageFrame>

      <Taskbar>
        <StartBtn><Windows /></StartBtn>
        <SearchBox>
          <SearchGlyph size={17} strokeWidth={1.3} />
          <span>Type here to search</span>
          <OwlArt><Owls /></OwlArt>
        </SearchBox>
        <TaskIcon $w={49}><TaskView /></TaskIcon>
        <TaskIcon $w={49} $ml={3}><Edge /></TaskIcon>
        <TaskIcon $w={49}><Firefox /></TaskIcon>
        <TaskIcon $w={49}><StoreIco /></TaskIcon>
        <TaskIcon $w={49}><WavyBlue /></TaskIcon>
        <TaskIcon $w={49}><MailIco /></TaskIcon>
        <TaskIcon $w={49}><SnailIco /></TaskIcon>
        <TaskIcon $w={49} $run><FolderIco /></TaskIcon>
        <TaskIcon $w={49}><OrangeApp /></TaskIcon>
        <TaskIcon $w={49}><Chrome /></TaskIcon>
        <TaskIcon $w={49}><CameraApp /></TaskIcon>
        <TaskIcon $w={49} $active $run><Chrome /><Badge><Avatar w={15} h={17} /></Badge></TaskIcon>
        <TaskIcon $w={49} $run><Chrome /><Badge><HBadge /></Badge></TaskIcon>
        <Weather><WeatherIco /><span>31°C</span></Weather>
        <Tray>
          <TraySlot><ChevronUp size={17} strokeWidth={1.2} /></TraySlot>
          {TrayIcons.map((ic, i) => <TraySlot key={i}>{ic}</TraySlot>)}
          <TraySlot><Volume1 size={17} strokeWidth={1.1} /></TraySlot>
          <TraySlot>
            <svg width="16" height="16" viewBox="0 0 16 16" fill="none" stroke="#e8e8e8"><path d="M1 15A14 14 0 0 1 15 1M5 15A10 10 0 0 1 15 5M9 15A6 6 0 0 1 15 9" opacity=".8" /></svg>
          </TraySlot>
        </Tray>
        <Clock>11:41 AM<br />4/26/2023</Clock>
        <TaskIcon $w={44}><Notif /></TaskIcon>
      </Taskbar>
    </Root>
  );
}
